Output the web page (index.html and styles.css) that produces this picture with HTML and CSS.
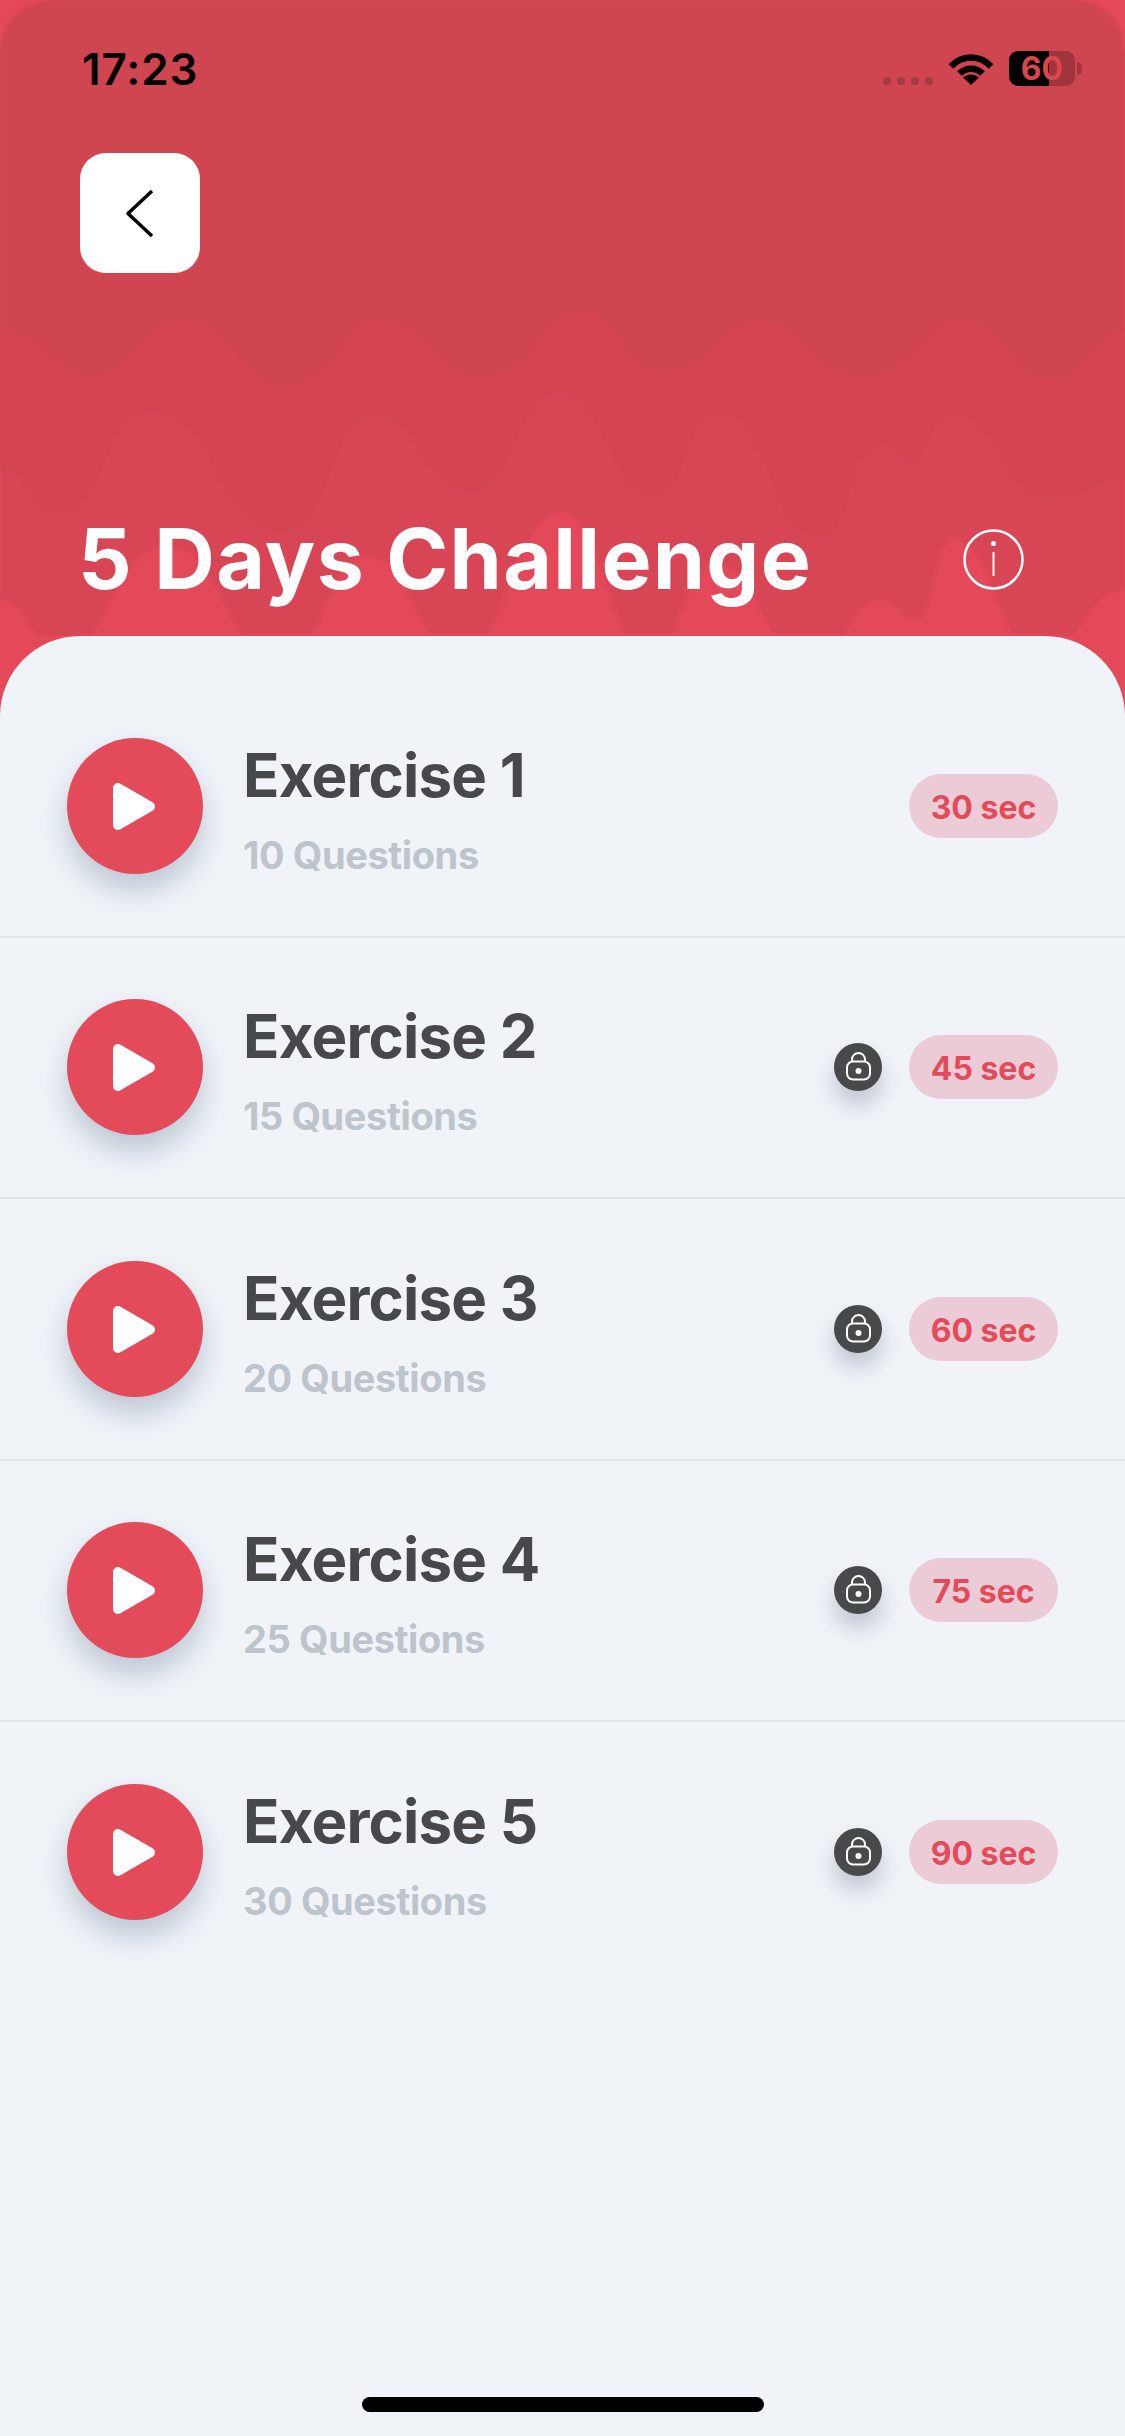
FILE: index.html
```html
<!DOCTYPE html>
<html lang="en">
<head>
    <meta charset="UTF-8">
    <meta name="viewport" content="width=device-width, initial-scale=1.0">
    <title>5 Days Challenge</title>
    <link rel="stylesheet" href="styles.css">
</head>
<body>
    <svg class="defs" width="0" height="0">
        <symbol id="play" viewBox="0 0 136 136">
            <polygon points="51,50 83,68.5 51,87" fill="#fff" stroke="#fff" stroke-width="10" stroke-linejoin="round"/>
        </symbol>
        <symbol id="lock" viewBox="0 0 48 48">
            <rect x="13" y="18.5" width="23" height="18" rx="6" fill="none" stroke="#fff" stroke-width="2"/>
            <path d="M18 18.5v-2a6.500 6.500 0 0 1 13 0v2" fill="none" stroke="#fff" stroke-width="2"/>
            <circle cx="24.500" cy="28" r="3" fill="#fff"/>
        </symbol>
    </svg>

    <div class="page">
        <header class="hero">
            <!-- background drips -->
            <svg class="waves" viewBox="0 0 1125 636" width="1125" height="636">
                <path fill="#d84656" d="M0 60Q0 0 60 0H1065Q1125 0 1125 60V590C1085 590 1085 650 1040 650C995 650 995 540 953 540C934 540 934 620 915 620C899 620 899 600 883 600C846 600 846 660 810 660C762 660 762 565 715 565C682 565 682 655 650 655C606 655 606 513 562 513C511 513 511 650 460 650C413 650 413 556 367 556C324 556 324 660 282 660C224 660 224 546 167 546C113 546 113 650 60 650C30 650 30 600 0 600Z"/>
                <path fill="#d44451" d="M0 60Q0 0 60 0H1065Q1125 0 1125 60V480C1100 480 1085 500 1050 500C1000 500 1000 415 950 415C930 415 930 463 910 463C895 463 895 446 880 446C850 446 850 540 820 540C770 540 770 415 720 415C686 415 686 497 653 497C606 497 606 395 560 395C515 395 515 493 470 493C422 493 422 417 375 417C330 417 330 533 285 533C217 533 217 413 150 413C105 413 105 515 60 515C30 515 30 470 0 470Z"/>
                <path fill="#cf4650" d="M0 60Q0 0 60 0H1065Q1125 0 1125 60V330C1090 330 1090 380 1050 380C1010 380 1010 320 960 320C920 320 920 375 860 375C810 375 810 320 760 320C720 320 720 370 660 370C620 370 620 310 580 310C540 310 540 375 480 375C430 375 430 320 380 320C340 320 340 385 280 385C240 385 240 320 180 320C140 320 140 375 90 375C50 375 50 330 0 330Z"/>
            </svg>

            <div class="status">
                <span class="time">17:23</span>
                <div class="status-right">
                    <div class="signal"><i></i><i></i><i></i><i></i></div>
                    <svg class="wifi" viewBox="0 0 46 33" width="46" height="33">
                        <path d="M3 14.500C14 2.500 32 2.500 43 14.500" fill="none" stroke="#000" stroke-width="6.500"/>
                        <path d="M11.500 21.500C18 15 28 15 34.500 21.500" fill="none" stroke="#000" stroke-width="6.500"/>
                        <path d="M23 33L15 25.500C20 21.500 26 21.500 31 25.500Z"/>
                    </svg>
                    <div class="battery">60</div>
                    <div class="battery-nub"></div>
                </div>
            </div>

            <button class="back">
                <svg viewBox="0 0 120 120" width="120" height="120">
                    <path d="M72 38L48 60.500L72 83" fill="none" stroke="#000" stroke-width="3.500" stroke-linejoin="round"/>
                </svg>
            </button>

            <div class="title-row">
                <h1 class="title">5 Days Challenge</h1>
                <svg class="info" viewBox="0 0 61 61" width="61" height="61">
                    <circle cx="30.500" cy="30.500" r="29" fill="none" stroke="#fff" stroke-width="2.500"/>
                    <circle cx="30.500" cy="14.500" r="2.500" fill="#fff"/>
                    <path d="M30.500 23V47" stroke="#fff" stroke-width="2"/>
                </svg>
            </div>
        </header>

        <main class="sheet">
            <div class="list">
                <div class="row">
                    <div class="play"><svg width="136" height="136"><use href="#play"/></svg></div>
                    <div class="info-text">
                        <div class="name">Exercise 1</div>
                        <div class="count">10 Questions</div>
                    </div>
                    <div class="duration">30 sec</div>
                </div>
                <div class="row">
                    <div class="play"><svg width="136" height="136"><use href="#play"/></svg></div>
                    <div class="info-text">
                        <div class="name">Exercise 2</div>
                        <div class="count">15 Questions</div>
                    </div>
                    <div class="lock"><svg width="48" height="48"><use href="#lock"/></svg></div>
                    <div class="duration">45 sec</div>
                </div>
                <div class="row">
                    <div class="play"><svg width="136" height="136"><use href="#play"/></svg></div>
                    <div class="info-text">
                        <div class="name">Exercise 3</div>
                        <div class="count">20 Questions</div>
                    </div>
                    <div class="lock"><svg width="48" height="48"><use href="#lock"/></svg></div>
                    <div class="duration">60 sec</div>
                </div>
                <div class="row">
                    <div class="play"><svg width="136" height="136"><use href="#play"/></svg></div>
                    <div class="info-text">
                        <div class="name">Exercise 4</div>
                        <div class="count">25 Questions</div>
                    </div>
                    <div class="lock"><svg width="48" height="48"><use href="#lock"/></svg></div>
                    <div class="duration">75 sec</div>
                </div>
                <div class="row">
                    <div class="play"><svg width="136" height="136"><use href="#play"/></svg></div>
                    <div class="info-text">
                        <div class="name">Exercise 5</div>
                        <div class="count">30 Questions</div>
                    </div>
                    <div class="lock"><svg width="48" height="48"><use href="#lock"/></svg></div>
                    <div class="duration">90 sec</div>
                </div>
            </div>
            <div class="home-bar"></div>
        </main>
    </div>
</body>
</html>
```

FILE: styles.css
```css
body {
    margin: 0;
    font-family: Inter, "Liberation Sans", sans-serif;
    background-color: #f0f4f9;
}

.defs {
    display: block;
    height: 0;
}

.page {
    display: flex;
    flex-direction: column;
    width: 1125px;
    height: 2436px;
    overflow: hidden;
    background-color: #e4495a;
}

/* Red header */
.hero {
    position: relative;
    display: flex;
    flex-direction: column;
    flex: none;
    box-sizing: border-box;
    height: 636px;
    overflow: hidden;
}

.waves {
    position: absolute;
    top: 0;
    left: 0;
    filter: blur(1.5px);
}

.status {
    position: relative;
    display: flex;
    justify-content: space-between;
    align-items: flex-start;
    height: 35px;
    padding: 51px 43px 0 82px;
}

.time {
    font-size: 44px;
    font-weight: 600;
    line-height: 36px;
    letter-spacing: 0.9px;
    color: #000;
}

.status-right {
    display: flex;
    align-items: center;
}

.signal {
    display: flex;
    gap: 6px;
    margin: 25px 15px 0 0;
}

.signal i {
    width: 8px;
    height: 8px;
    border-radius: 50%;
    background: #a83a44;
}

.wifi {
    display: block;
    margin-right: 15px;
}

.battery {
    width: 66px;
    height: 35px;
    border-radius: 9px;
    font-size: 32px;
    font-weight: 700;
    line-height: 35px;
    text-align: center;
    color: #d84650;
    background: linear-gradient(90deg, #000 40px, #a0353f 40px);
}

.battery-nub {
    width: 5px;
    height: 13px;
    margin-left: 2px;
    border-radius: 0 6px 6px 0;
    background: #a0353f;
}

.back {
    position: relative;
    flex: none;
    width: 120px;
    height: 120px;
    margin: 67px 0 0 80px;
    padding: 0;
    border: 0;
    border-radius: 26px;
    background: #fff;
}

.back svg {
    display: block;
}

.title-row {
    position: relative;
    display: flex;
    justify-content: space-between;
    align-items: center;
    margin-top: auto;
    padding: 0 101px 27px 78px;
}

.title {
    margin: 0;
    font-size: 84px;
    font-weight: 700;
    line-height: 100px;
    letter-spacing: 1.3px;
    color: #fff;
}

.info {
    display: block;
}

/* Exercise sheet */
.sheet {
    display: flex;
    flex-direction: column;
    flex: 1;
    box-sizing: border-box;
    padding: 40px 0 24px;
    border-radius: 80px 80px 0 0;
    background-color: #f0f4f9;
}

.row {
    display: flex;
    align-items: center;
    box-sizing: border-box;
    height: 261.5px;
    padding: 0 67px;
    border-bottom: 2px solid #e2e6eb;
}

.row:last-child {
    border-bottom-color: transparent;
}

.play {
    flex: none;
    width: 136px;
    height: 136px;
    border-radius: 50%;
    background: #e34a5a;
    box-shadow: 0 16px 30px rgba(70, 90, 120, 0.3);
}

.play svg,
.lock svg {
    display: block;
}

.info-text {
    margin-left: 40px;
    padding-top: 18px;
}

.name {
    margin-bottom: 6px;
    font-size: 60px;
    font-weight: 700;
    line-height: 74px;
    letter-spacing: -0.8px;
    color: #46484b;
}

.count {
    font-size: 38px;
    font-weight: 700;
    line-height: 74px;
    letter-spacing: -0.4px;
    color: #bec4cb;
}

.lock {
    flex: none;
    width: 48px;
    height: 48px;
    margin-left: auto;
    border-radius: 50%;
    background: #48494b;
    box-shadow: 0 14px 22px rgba(70, 80, 100, 0.28);
}

.duration {
    flex: none;
    width: 149px;
    height: 64px;
    margin-left: 27px;
    border-radius: 32px;
    font-size: 32px;
    font-weight: 700;
    line-height: 68px;
    text-align: center;
    color: #e34a5a;
    background: #ebcbd5;
}

.row:first-child .duration {
    margin-left: auto;
}

.home-bar {
    flex: none;
    align-self: center;
    width: 402px;
    height: 15px;
    margin-top: auto;
    border-radius: 8px;
    background: #000;
}
```
